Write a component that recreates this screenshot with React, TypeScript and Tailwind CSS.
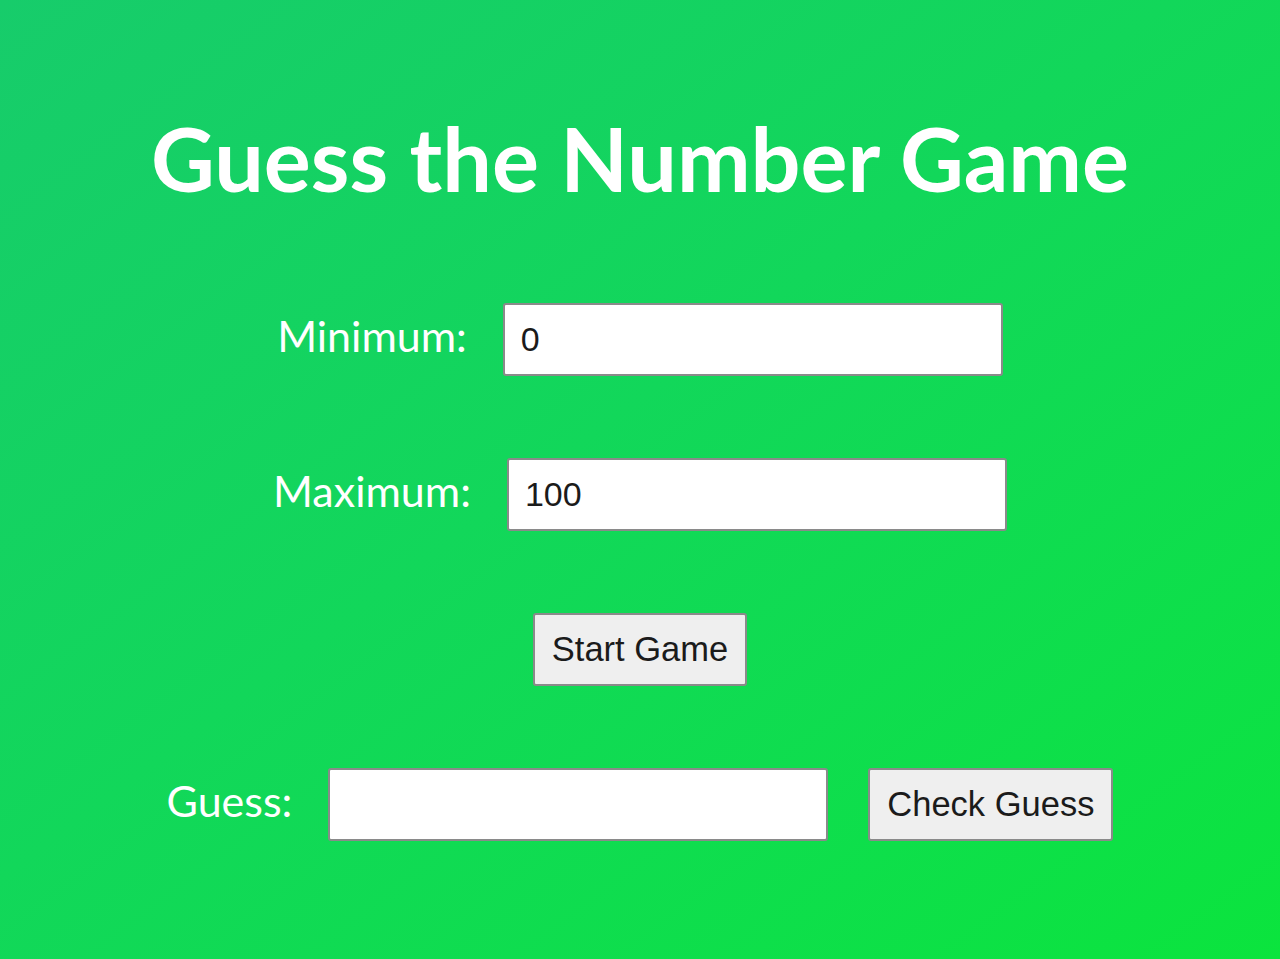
import React from "react";

const label = "pb-[8px] text-white text-[43px] font-normal [font-family:Lato,'Noto_Sans',sans-serif] leading-none";
const field =
  "h-[73px] w-[500px] rounded-[3px] border-2 border-[#8a8a8a] bg-white px-[16px] text-[34px] text-[#1b1b1b] [font-family:'Liberation_Sans',Arial,sans-serif] outline-none";
const btn =
  "h-[73px] rounded-[3px] border-2 border-[#8a8a8a] bg-[#efefef] px-[17px] text-[34.5px] text-[#1b1b1b] [font-family:'Liberation_Sans',Arial,sans-serif]";

export default function App() {
  return (
    <div className="min-h-[959px] w-full bg-linear-to-br from-[#17cc6b] to-[#0be43d] flex flex-col items-center pt-[108px]">
      <h1 className="h-[100px] flex items-center text-white text-[88px] font-bold leading-none [font-family:Lato,'Noto_Sans',sans-serif]">
        Guess the Number Game
      </h1>

      <div className="mt-[95px] flex items-center gap-[36px]">
        <label className={label}>Minimum:</label>
        <input className={field} type="number" defaultValue={0} />
      </div>

      <div className="mt-[82px] flex items-center gap-[36px]">
        <label className={label}>Maximum:</label>
        <input className={field} type="number" defaultValue={100} />
      </div>

      <div className="mt-[82px] flex items-center">
        <button className={btn}>Start Game</button>
      </div>

      <div className="mt-[82px] flex items-center gap-[36px]">
        <label className={label}>Guess:</label>
        <input className={field} type="number" />
        <button className={btn + " ml-[4px]"}>Check Guess</button>
      </div>
    </div>
  );
}
